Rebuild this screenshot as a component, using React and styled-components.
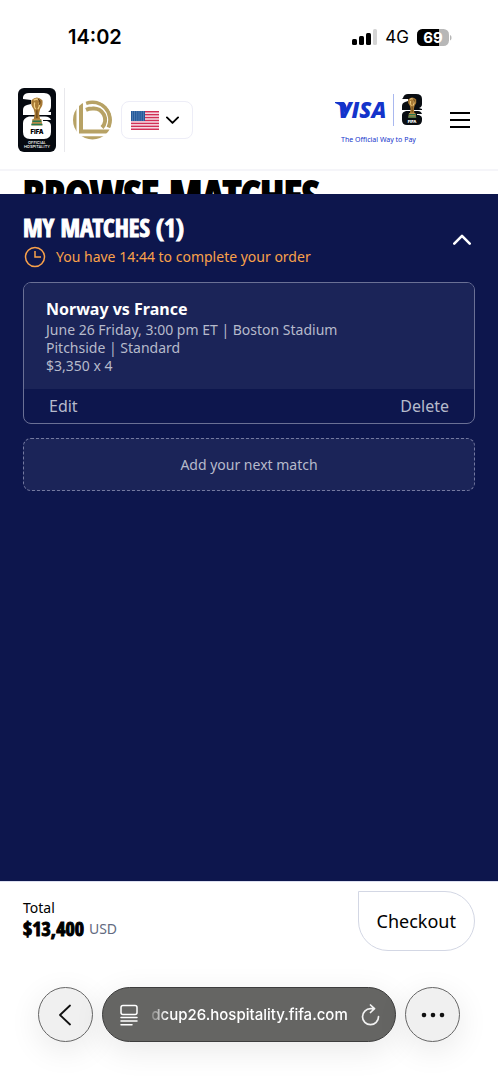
import { useState } from 'react';
import styled, { createGlobalStyle, css } from 'styled-components';

const flagStars = [0, 1, 2, 3, 4];
const flagStripes = [0, 1, 2, 3, 4, 5, 6];

function App() {
  const [open, setOpen] = useState(true);

  return (
    <Page>
      <GlobalStyle />
      <StatusBar>
        <Clock>14:02</Clock>
        <StatusIcons>
          <Signal />
          <Network>4G</Network>
          <Battery />
        </StatusIcons>
      </StatusBar>

      <Header>
        <Brand>
          <LogoLink href="#home" aria-label="Official Hospitality">
            <HospitalityLogo />
          </LogoLink>
          <Divider />
          <LocationLogo />
          <LocaleButton aria-label="Choose country" aria-haspopup="listbox">
            <Flag />
            <Chevron />
          </LocaleButton>
        </Brand>
        <Sponsor>
          <VisaLink href="#visa">
            <SponsorMarks>
              <VisaMark />
              <SponsorLine />
              <CupLogo />
            </SponsorMarks>
            <Tagline>The Official Way to Pay</Tagline>
          </VisaLink>
          <IconButton aria-label="Menu">
            <MenuIcon />
          </IconButton>
        </Sponsor>
      </Header>

      <BrowseStrip>
        <BrowseTitle>BROWSE MATCHES</BrowseTitle>
      </BrowseStrip>

      <Panel>
        <PanelHeader>
          <div>
            <PanelTitle>MY MATCHES (1)</PanelTitle>
            <Timer>
              <ClockIcon />
              You have 14:44 to complete your order
            </Timer>
          </div>
          <IconButton aria-label="Toggle my matches" aria-expanded={open} onClick={() => setOpen(!open)}>
            <Chevron $up={open} $big />
          </IconButton>
        </PanelHeader>
        {open && (
          <Matches>
            <Card>
              <CardBody>
                <CardTitle>Norway vs France</CardTitle>
                <CardLine>June 26 Friday, 3:00 pm ET | Boston Stadium</CardLine>
                <CardLine>Pitchside | Standard</CardLine>
                <CardLine>$3,350 x 4</CardLine>
              </CardBody>
              <CardActions>
                <TextButton>Edit</TextButton>
                <TextButton>Delete</TextButton>
              </CardActions>
            </Card>
            <AddButton>Add your next match</AddButton>
          </Matches>
        )}
      </Panel>

      <Summary>
        <div>
          <TotalLabel>Total</TotalLabel>
          <TotalRow>
            <Amount>$13,400</Amount>
            <Currency>USD</Currency>
          </TotalRow>
        </div>
        <CheckoutButton>Checkout</CheckoutButton>
      </Summary>

      <BrowserBar>
        <RoundButton aria-label="Back">
          <BackIcon />
        </RoundButton>
        <AddressBar>
          <IconButton aria-label="Page settings">
            <PageIcon />
          </IconButton>
          <AddressInput aria-label="Address" defaultValue="dcup26.hospitality.fifa.com" />
          <IconButton aria-label="Reload">
            <ReloadIcon />
          </IconButton>
        </AddressBar>
        <RoundButton aria-label="More">
          <DotsIcon />
        </RoundButton>
      </BrowserBar>
    </Page>
  );
}

const Signal = () => (
  <svg width="25" height="16" viewBox="0 0 25 16" aria-hidden="true">
    <rect x="0" y="10" width="5" height="6" rx="1.5" />
    <rect x="7" y="7" width="5" height="9" rx="1.5" />
    <rect x="14" y="4" width="5" height="12" rx="1.5" />
    <rect x="21" y="0" width="4" height="16" rx="1.5" fill="#d4d4d4" />
  </svg>
);

const Battery = () => (
  <svg width="35" height="17" viewBox="0 0 35 17" role="img" aria-label="Battery 69">
    <clipPath id="battery">
      <rect width="32" height="17" rx="5.5" />
    </clipPath>
    <g clipPath="url(#battery)">
      <rect width="32" height="17" fill="#b7b7b7" />
      <rect width="22" height="17" />
    </g>
    <path d="M33 6v5.500c2-.6 2-4.900 0-5.500" fill="#b7b7b7" />
    <text x="16" y="14" textAnchor="middle" fontFamily="Inter, sans-serif" fontSize="15" fontWeight="700" fill="#fff">69</text>
  </svg>
);

// the trophy is shared by both tournament marks
const Trophy = () => (
  <g>
    <path d="M4 3Q9-2 14 3q1 4-2 8l-1 4 1 6H6l1-6-1-4Q3 7 4 3" fill="#a87a35" />
    <path d="M6 3q3-2 5 0M7 5q-1 4 1 6M11 5q1 3-1 6" fill="none" stroke="#f1cf83" strokeWidth="1.2" />
    <path d="M10 2q3 2 1 5M9 12v7" fill="none" stroke="#5d3c17" strokeWidth="1" />
    <path d="M5 20h8l1 6H4z" fill="#b68b49" />
    <path d="M5 22h8M4 25h10" stroke="#24794f" strokeWidth="1.4" />
  </g>
);

const HospitalityLogo = () => (
  <svg width="38" height="64" viewBox="0 0 38 64" aria-hidden="true">
    <rect width="38" height="64" rx="6" fill="#050910" />
    <path d="M5 11V9q1-4 6-4h15q7 0 7 7v6q0 4-3 6h3v3H5v-5q0-4 4-5l4-1v-4z" fill="#fff" />
    <path d="M11 28.500h16q5 0 6 3.500h-8v1h4q4 1 4 5v6q0 7-7 7H12q-7 0-7-7v-9q0-5 6-6.500" fill="#fff" />
    <g transform="translate(9 9) scale(1.1)">
      <Trophy />
    </g>
    <text x="19" y="46" textAnchor="middle" fontFamily="Inter, sans-serif" fontSize="6" fontWeight="900">FIFA</text>
    <text x="19" y="56" textAnchor="middle" fontFamily="Inter, sans-serif" fontSize="4" fontWeight="500" fill="#fff">OFFICIAL</text>
    <text x="19" y="60" textAnchor="middle" fontFamily="Inter, sans-serif" fontSize="4" fontWeight="500" fill="#fff">HOSPITALITY</text>
  </svg>
);

const CupLogo = () => (
  <svg width="20" height="32" viewBox="0 0 20 32" aria-hidden="true">
    <path d="M1 4q1-4 5-4h8q6 0 6 5v5q0 3-3 4l3 1v1H0v-4q0-3 3-4l3-1V5H0z" fill="#090d12" />
    <path d="M4 17h12q3 0 4 3h-5v1h2q3 1 3 3v2q0 5-5 5H5q-5 0-5-5v-5q0-3 4-4" fill="#090d12" />
    <g transform="translate(3 3) scale(.8)">
      <Trophy />
    </g>
    <text x="10" y="29" textAnchor="middle" fontFamily="Inter, sans-serif" fontSize="4" fontWeight="900" fill="#fff">FIFA</text>
  </svg>
);

const LocationLogo = () => (
  <svg width="40" height="40" viewBox="0 0 40 40" role="img" aria-label="On Location">
    <clipPath id="location">
      <circle cx="19.500" cy="20" r="19.500" />
    </clipPath>
    <g clipPath="url(#location)" fill="none" stroke="#b7a265" strokeWidth="4">
      <path d="M1.500 8v24M8 2v29.500H38" />
      <path d="M6 38.300H34" />
      <path d="M13 3A18 18 0 0 1 35.500 27.500" />
      <path d="M13 9.800q3-1.300 6.500-1.300A11.300 11.300 0 0 1 29 27.500" />
    </g>
  </svg>
);

const VisaMark = () => (
  <VisaSvg width="50" height="20" viewBox="0 0 50 20" aria-hidden="true">
    <path d="M0 2h8q2 0 3 3l2 7-3 2Q8 6 0 3z" fill="#1434cb" />
    <text x="3" y="18" fontFamily="Open Sans, sans-serif" fontSize="22" fontWeight="800" fontStyle="italic" fill="#1434cb">VISA</text>
  </VisaSvg>
);

const VisaSvg = styled.svg`
  overflow: visible;
`;

const Flag = () => (
  <svg width="28" height="19" viewBox="0 0 28 19" aria-hidden="true">
    <rect width="28" height="19" fill="#f7e6ec" />
    {flagStripes.map(i => (
      <rect key={i} y={i * 2.92} width="28" height="1.460" fill="#d22f56" />
    ))}
    <rect width="14" height="10" fill="#255a9b" />
    {flagStars.map(i => (
      <path key={i} d={`M1 ${1 + i * 2}h12`} stroke="#a9c4df" strokeWidth=".7" strokeDasharray=".8 1.400" />
    ))}
  </svg>
);

const MenuIcon = () => (
  <svg width="20" height="18" viewBox="0 0 20 18" aria-hidden="true">
    <path d="M0 2h20M0 9h20M0 16h20" stroke="#000" strokeWidth="2.200" />
  </svg>
);

const ClockIcon = () => (
  <svg width="22" height="22" viewBox="0 0 22 22" fill="none" stroke="#f9a14a" strokeWidth="1.500" aria-hidden="true">
    <circle cx="11" cy="11" r="9.500" />
    <path d="M11 5v6h6" />
  </svg>
);

const BackIcon = () => (
  <svg width="14" height="22" viewBox="0 0 14 22" fill="none" stroke="#111" strokeWidth="1.800" strokeLinecap="round" strokeLinejoin="round" aria-hidden="true">
    <path d="M11 1.500 1 11 11 20.500" />
  </svg>
);

const PageIcon = () => (
  <svg width="18" height="22" viewBox="0 0 18 22" fill="none" stroke="#fff" strokeWidth="1.500" strokeLinecap="round" aria-hidden="true">
    <rect x="1" y="1.500" width="16" height="9" rx="2" />
    <path d="M1 13.500h16M1 17h16M1 20.800h11" />
  </svg>
);

const ReloadIcon = () => (
  <svg width="19" height="22" viewBox="0 0 19 22" fill="none" stroke="#f2f2f2" strokeWidth="1.700" strokeLinecap="round" strokeLinejoin="round" aria-hidden="true">
    <path d="M13 4.700H9.500a8 8 0 1 0 8 8M9.500 1l4 3.700-4 3.800" />
  </svg>
);

const DotsIcon = () => (
  <svg width="24" height="6" viewBox="0 0 24 6" fill="#111" aria-hidden="true">
    <circle cx="3" cy="3" r="2.300" />
    <circle cx="12" cy="3" r="2.300" />
    <circle cx="21" cy="3" r="2.300" />
  </svg>
);

const ChevronSvg = styled.svg`
  width: ${({ $big }) => $big ? '18px' : '13px'};
  fill: none;
  stroke: currentColor;
  stroke-width: 2;
  stroke-linejoin: round;
  stroke-linecap: round;
  ${({ $up }) => $up && css`transform: rotate(180deg);`}
`;

const Chevron = props => (
  <ChevronSvg viewBox="0 0 14 9" aria-hidden="true" {...props}>
    <path d="m1 1.500 6 6 6-6" />
  </ChevronSvg>
);

const GlobalStyle = createGlobalStyle`
  * {
    box-sizing: border-box;
  }

  body {
    margin: 0;
    background: #fff;
    font-family: "Noto Sans", sans-serif;
  }

  button, input {
    margin: 0;
    padding: 0;
    border: 0;
    background: none;
    color: inherit;
    font: inherit;
  }

  button {
    cursor: pointer;
  }
`;

const displayFont = css`
  margin: 0;
  font-family: "Open Sans Condensed", "Roboto Condensed", sans-serif;
  font-weight: 700;
`;

const Page = styled.div`
  display: flex;
  flex-direction: column;
  min-height: 100vh;
`;

const StatusBar = styled.div`
  display: flex;
  align-items: center;
  justify-content: space-between;
  height: 71px;
  padding: 3px 46px 0 68px;
  font-family: Inter, sans-serif;
`;

const Clock = styled.span`
  font-size: 20px;
  font-weight: 600;
`;

const StatusIcons = styled.div`
  display: flex;
  align-items: center;
  gap: 8px;
`;

const Network = styled.span`
  font-size: 17px;
`;

const Header = styled.header`
  display: flex;
  align-items: center;
  justify-content: space-between;
  height: 100px;
  padding: 0 28px 0 18px;
  border-bottom: 2px solid #f5f5f9;
`;

const Brand = styled.div`
  display: flex;
  align-items: center;
  gap: 8px;
`;

const LogoLink = styled.a`
  display: flex;
`;

const Divider = styled.span`
  width: 1px;
  height: 64px;
  background: #e8e8ec;
`;

const LocaleButton = styled.button`
  display: flex;
  align-items: center;
  gap: 7px;
  height: 38px;
  padding: 0 13px 0 9px;
  border: 1px solid #ededf7;
  border-radius: 8px;
`;

const Sponsor = styled.div`
  display: flex;
  align-items: center;
  gap: 28px;
`;

const VisaLink = styled.a`
  display: flex;
  flex-direction: column;
  gap: 8px;
  color: #1434cb;
  text-decoration: none;
`;

const SponsorMarks = styled.span`
  display: flex;
  align-items: center;
  gap: 8px;
`;

const SponsorLine = styled.span`
  width: 1px;
  height: 32px;
  background: #a9b8ef;
`;

const Tagline = styled.span`
  font-size: 7px;
  line-height: 12px;
  text-align: center;
`;

const IconButton = styled.button`
  display: flex;
  align-items: center;
  justify-content: center;
`;

const BrowseStrip = styled.div`
  height: 23px;
  padding: 0 23px;
  overflow: hidden;
`;

const BrowseTitle = styled.h1`
  ${displayFont}
  font-size: 42px;
  line-height: 48px;
  white-space: nowrap;
  -webkit-text-stroke: 2px currentColor;
`;

const Panel = styled.section`
  flex: 1;
  padding: 18px 23px;
  background: #0d164d;
  color: #fff;
`;

const PanelHeader = styled.div`
  display: flex;
  align-items: center;
  justify-content: space-between;
  padding-right: 4px;
`;

const PanelTitle = styled.h2`
  ${displayFont}
  font-size: 25px;
  line-height: 31px;
  -webkit-text-stroke: 1px currentColor;
`;

const Timer = styled.div`
  display: flex;
  align-items: center;
  gap: 10px;
  padding: 3px 0 0 1px;
  color: #f9a14a;
  font-size: 14px;
  line-height: 22px;
`;

const Matches = styled.div`
  display: flex;
  flex-direction: column;
  gap: 14px;
  margin-top: 14px;
`;

const Card = styled.article`
  overflow: hidden;
  border: 1px solid #6a7095;
  border-radius: 8px;
`;

const CardBody = styled.div`
  padding: 14px 22px;
  background: #1b2458;
`;

const CardTitle = styled.h3`
  margin: 0;
  font-size: 16px;
  line-height: 24px;
`;

const CardLine = styled.p`
  margin: 0;
  color: #b6bacb;
  font-size: 14px;
  line-height: 18px;
`;

const CardActions = styled.div`
  display: flex;
  justify-content: space-between;
  padding: 5px 25px;
`;

const TextButton = styled.button`
  color: #b6bacb;
  font-size: 16px;
  line-height: 24px;
`;

const AddButton = styled.button`
  height: 53px;
  border: 1px dashed #7479a0;
  border-radius: 8px;
  background: #1b2458;
  color: #b6bacb;
  font-size: 14px;
`;

const Summary = styled.footer`
  display: flex;
  align-items: center;
  justify-content: space-between;
  padding: 9px 23px;
  border-top: 1px solid #dcdff0;
`;

const TotalLabel = styled.div`
  font-size: 14px;
  line-height: 20px;
`;

const TotalRow = styled.div`
  display: flex;
  align-items: center;
  gap: 5px;
  padding-bottom: 4px;
  line-height: 22px;
`;

const Amount = styled.strong`
  ${displayFont}
  font-size: 20px;
  -webkit-text-stroke: 1px currentColor;
`;

const Currency = styled.span`
  color: #626a80;
  font-size: 14px;
`;

const CheckoutButton = styled.button`
  height: 60px;
  padding: 0 18px;
  border: 1px solid #d3d7e4;
  border-radius: 0 30px 30px 30px;
  font-size: 18px;
`;

const BrowserBar = styled.nav`
  display: flex;
  gap: 9px;
  padding: 27px 38px 38px;
`;

const RoundButton = styled.button`
  display: flex;
  flex: none;
  align-items: center;
  justify-content: center;
  width: 55px;
  height: 55px;
  border: 1px solid #666;
  border-radius: 50%;
  background: #f0f0f0;
  box-shadow: 0 8px 32px rgba(0, 0, 0, 0.09);
`;

const AddressBar = styled.div`
  display: flex;
  flex: 1;
  align-items: center;
  gap: 13px;
  min-width: 0;
  height: 55px;
  padding: 0 15px 0 17px;
  border: 1px solid #3d3d3d;
  border-radius: 28px;
  background: #656563;
  box-shadow: 0 8px 32px rgba(0, 0, 0, 0.09);
  color: #fff;
`;

const AddressInput = styled.input`
  flex: 1;
  min-width: 0;
  font-family: Inter, sans-serif;
  font-size: 15px;
  font-weight: 500;
  text-align: center;
  mask-image: linear-gradient(to right, rgba(0, 0, 0, 0.2), #000 16px);
`;

export default App;
